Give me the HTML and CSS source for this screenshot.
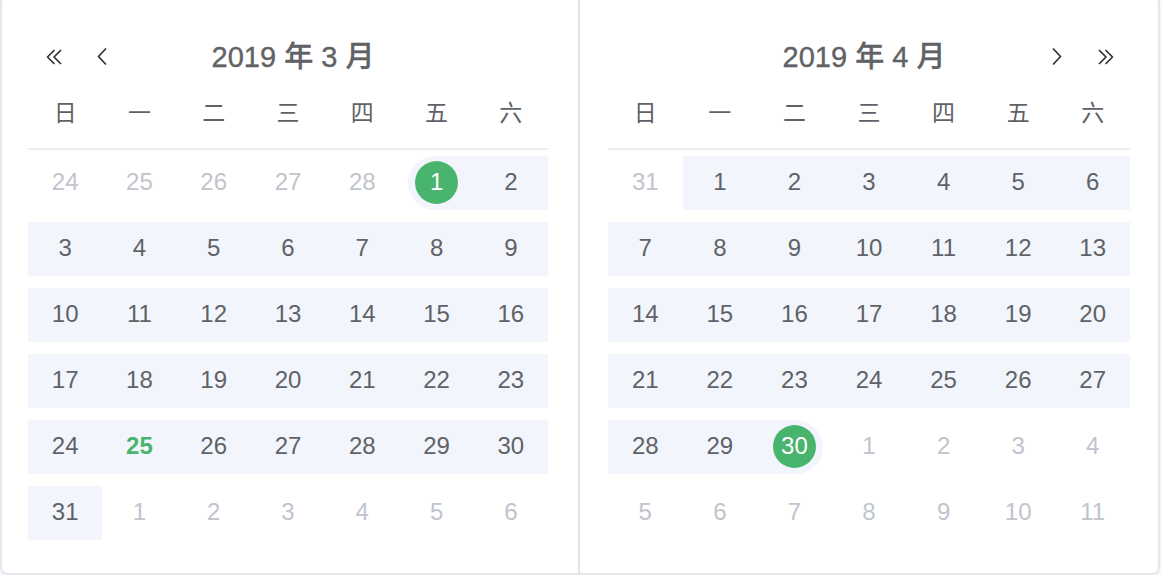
FILE: index.html
```html
<!DOCTYPE html>
<html lang="zh">
<head>
<meta charset="utf-8">
<title>日期范围</title>
<link rel="stylesheet" href="styles.css">
</head>
<body>
<div class="picker">
  <div class="pane pane-left">
    <div class="header">
      <div class="nav nav-left">
        <button class="btn btn-first" aria-label="前一年"><svg width="18" height="16" viewBox="0 0 18 16"><polyline points="9,1.5 2.5,8 9,14.5"/><polyline points="15.5,1.5 9,8 15.5,14.5"/></svg></button>
        <button class="btn btn-second" aria-label="上个月"><svg width="10" height="17" viewBox="0 0 10 17"><polyline points="8.5,1 1.5,8.5 8.5,16"/></svg></button>
      </div>
      <div class="title title-left">2019 年 3 月</div>
      <div class="nav"></div>
    </div>
    <div class="weekdays"><span>日</span><span>一</span><span>二</span><span>三</span><span>四</span><span>五</span><span>六</span></div>
    <div class="days">
      <div class="cell other"><div class="in">24</div></div>
      <div class="cell other"><div class="in">25</div></div>
      <div class="cell other"><div class="in">26</div></div>
      <div class="cell other"><div class="in">27</div></div>
      <div class="cell other"><div class="in">28</div></div>
      <div class="cell"><div class="in range start"><span class="dot">1</span></div></div>
      <div class="cell"><div class="in range">2</div></div>

      <div class="cell"><div class="in range">3</div></div>
      <div class="cell"><div class="in range">4</div></div>
      <div class="cell"><div class="in range">5</div></div>
      <div class="cell"><div class="in range">6</div></div>
      <div class="cell"><div class="in range">7</div></div>
      <div class="cell"><div class="in range">8</div></div>
      <div class="cell"><div class="in range">9</div></div>

      <div class="cell"><div class="in range">10</div></div>
      <div class="cell"><div class="in range">11</div></div>
      <div class="cell"><div class="in range">12</div></div>
      <div class="cell"><div class="in range">13</div></div>
      <div class="cell"><div class="in range">14</div></div>
      <div class="cell"><div class="in range">15</div></div>
      <div class="cell"><div class="in range">16</div></div>

      <div class="cell"><div class="in range">17</div></div>
      <div class="cell"><div class="in range">18</div></div>
      <div class="cell"><div class="in range">19</div></div>
      <div class="cell"><div class="in range">20</div></div>
      <div class="cell"><div class="in range">21</div></div>
      <div class="cell"><div class="in range">22</div></div>
      <div class="cell"><div class="in range">23</div></div>

      <div class="cell"><div class="in range">24</div></div>
      <div class="cell today"><div class="in range">25</div></div>
      <div class="cell"><div class="in range">26</div></div>
      <div class="cell"><div class="in range">27</div></div>
      <div class="cell"><div class="in range">28</div></div>
      <div class="cell"><div class="in range">29</div></div>
      <div class="cell"><div class="in range">30</div></div>

      <div class="cell"><div class="in range">31</div></div>
      <div class="cell other"><div class="in">1</div></div>
      <div class="cell other"><div class="in">2</div></div>
      <div class="cell other"><div class="in">3</div></div>
      <div class="cell other"><div class="in">4</div></div>
      <div class="cell other"><div class="in">5</div></div>
      <div class="cell other"><div class="in">6</div></div>
    </div>
  </div>
  <div class="pane pane-right">
    <div class="header">
      <div class="nav"></div>
      <div class="title title-right">2019 年 4 月</div>
      <div class="nav nav-right">
        <button class="btn btn-next" aria-label="下个月"><svg width="10" height="17" viewBox="0 0 10 17"><polyline points="1.5,1 8.5,8.5 1.5,16"/></svg></button>
        <button class="btn btn-last" aria-label="后一年"><svg width="18" height="16" viewBox="0 0 18 16"><polyline points="2.5,1.5 9,8 2.5,14.5"/><polyline points="9,1.5 15.5,8 9,14.5"/></svg></button>
      </div>
    </div>
    <div class="weekdays"><span>日</span><span>一</span><span>二</span><span>三</span><span>四</span><span>五</span><span>六</span></div>
    <div class="days">
      <div class="cell other"><div class="in">31</div></div>
      <div class="cell"><div class="in range">1</div></div>
      <div class="cell"><div class="in range">2</div></div>
      <div class="cell"><div class="in range">3</div></div>
      <div class="cell"><div class="in range">4</div></div>
      <div class="cell"><div class="in range">5</div></div>
      <div class="cell"><div class="in range">6</div></div>

      <div class="cell"><div class="in range">7</div></div>
      <div class="cell"><div class="in range">8</div></div>
      <div class="cell"><div class="in range">9</div></div>
      <div class="cell"><div class="in range">10</div></div>
      <div class="cell"><div class="in range">11</div></div>
      <div class="cell"><div class="in range">12</div></div>
      <div class="cell"><div class="in range">13</div></div>

      <div class="cell"><div class="in range">14</div></div>
      <div class="cell"><div class="in range">15</div></div>
      <div class="cell"><div class="in range">16</div></div>
      <div class="cell"><div class="in range">17</div></div>
      <div class="cell"><div class="in range">18</div></div>
      <div class="cell"><div class="in range">19</div></div>
      <div class="cell"><div class="in range">20</div></div>

      <div class="cell"><div class="in range">21</div></div>
      <div class="cell"><div class="in range">22</div></div>
      <div class="cell"><div class="in range">23</div></div>
      <div class="cell"><div class="in range">24</div></div>
      <div class="cell"><div class="in range">25</div></div>
      <div class="cell"><div class="in range">26</div></div>
      <div class="cell"><div class="in range">27</div></div>

      <div class="cell"><div class="in range">28</div></div>
      <div class="cell"><div class="in range">29</div></div>
      <div class="cell"><div class="in range end"><span class="dot">30</span></div></div>
      <div class="cell other"><div class="in">1</div></div>
      <div class="cell other"><div class="in">2</div></div>
      <div class="cell other"><div class="in">3</div></div>
      <div class="cell other"><div class="in">4</div></div>

      <div class="cell other"><div class="in">5</div></div>
      <div class="cell other"><div class="in">6</div></div>
      <div class="cell other"><div class="in">7</div></div>
      <div class="cell other"><div class="in">8</div></div>
      <div class="cell other"><div class="in">9</div></div>
      <div class="cell other"><div class="in">10</div></div>
      <div class="cell other"><div class="in">11</div></div>
    </div>
  </div>
</div>
</body>
</html>
```

FILE: styles.css
```css
html, body {
  margin: 0;
  padding: 0;
  background: #ffffff;
  overflow: hidden;
}

body {
  font-family: "Liberation Sans", "Noto Sans CJK SC", sans-serif;
  color: #606266;
}

.picker {
  box-sizing: border-box;
  width: 1160px;
  height: 581px;
  margin-top: -6px;
  border: 2px solid #e4e7ed;
  border-radius: 8px;
  background: #ffffff;
  box-shadow: 0 2px 10px rgba(0, 0, 0, 0.08);
  display: flex;
}

.pane {
  box-sizing: border-box;
  height: 100%;
}

.pane-left {
  width: 578px;
  padding: 0 30px 0 26px;
  border-right: 2px solid #e4e4e4;
}

.pane-right {
  width: 578px;
  padding: 0 28px 0 28px;
}

.header {
  box-sizing: border-box;
  height: 88px;
  padding-top: 33px;
  display: grid;
  grid-template-columns: 1fr auto 1fr;
  align-items: center;
}

.nav {
  display: flex;
  align-items: center;
}

.nav-right {
  justify-content: flex-end;
}

.btn {
  width: 30px;
  height: 30px;
  padding: 0;
  border: 0;
  background: transparent;
  display: flex;
  align-items: center;
  justify-content: center;
  cursor: pointer;
}

.btn svg {
  display: block;
  fill: none;
  stroke: #303133;
  stroke-width: 1.7;
  stroke-linecap: round;
  stroke-linejoin: round;
}

.btn-first { margin-left: 11px; }
.btn-second { margin-left: 17.5px; }
.btn-next { margin-right: 18.5px; }
.btn-last { margin-right: 9.5px; }

.title {
  font-size: 29px;
  font-weight: 500;
  line-height: 40px;
  color: #606266;
  white-space: nowrap;
  -webkit-text-stroke: 0.35px #606266;
}

.title-left { padding-left: 10px; }
.title-right { padding-right: 10px; }

.weekdays {
  display: grid;
  grid-template-columns: repeat(7, 1fr);
  height: 54px;
  line-height: 54px;
  padding-bottom: 10px;
  border-bottom: 2px solid #ebeef5;
  font-family: "Noto Sans CJK SC", sans-serif;
  font-size: 23px;
  font-weight: 400;
  text-align: center;
  color: #606266;
}

.days {
  display: grid;
  grid-template-columns: repeat(7, 1fr);
  grid-auto-rows: 66px;
  font-size: 24px;
}

.cell {
  box-sizing: border-box;
  padding: 6px 0;
}

.in {
  box-sizing: border-box;
  height: 54px;
  padding-bottom: 3px;
  display: flex;
  align-items: center;
  justify-content: center;
}

.range {
  background: #f2f6fc;
}

.range.start {
  margin-left: 9px;
  border-radius: 27px 0 0 27px;
  padding-right: 9px;
}

.range.end {
  margin-right: 9px;
  border-radius: 0 27px 27px 0;
  padding-left: 9px;
}

.range.start,
.range.end {
  padding-bottom: 1px;
}

.other .in {
  color: #c0c4cc;
}

.today .in {
  color: #48b46e;
  font-weight: 700;
}

.dot {
  width: 43px;
  height: 43px;
  border-radius: 50%;
  background: #48b46e;
  color: #ffffff;
  display: flex;
  align-items: center;
  justify-content: center;
  padding-bottom: 2px;
  box-sizing: border-box;
}
```
